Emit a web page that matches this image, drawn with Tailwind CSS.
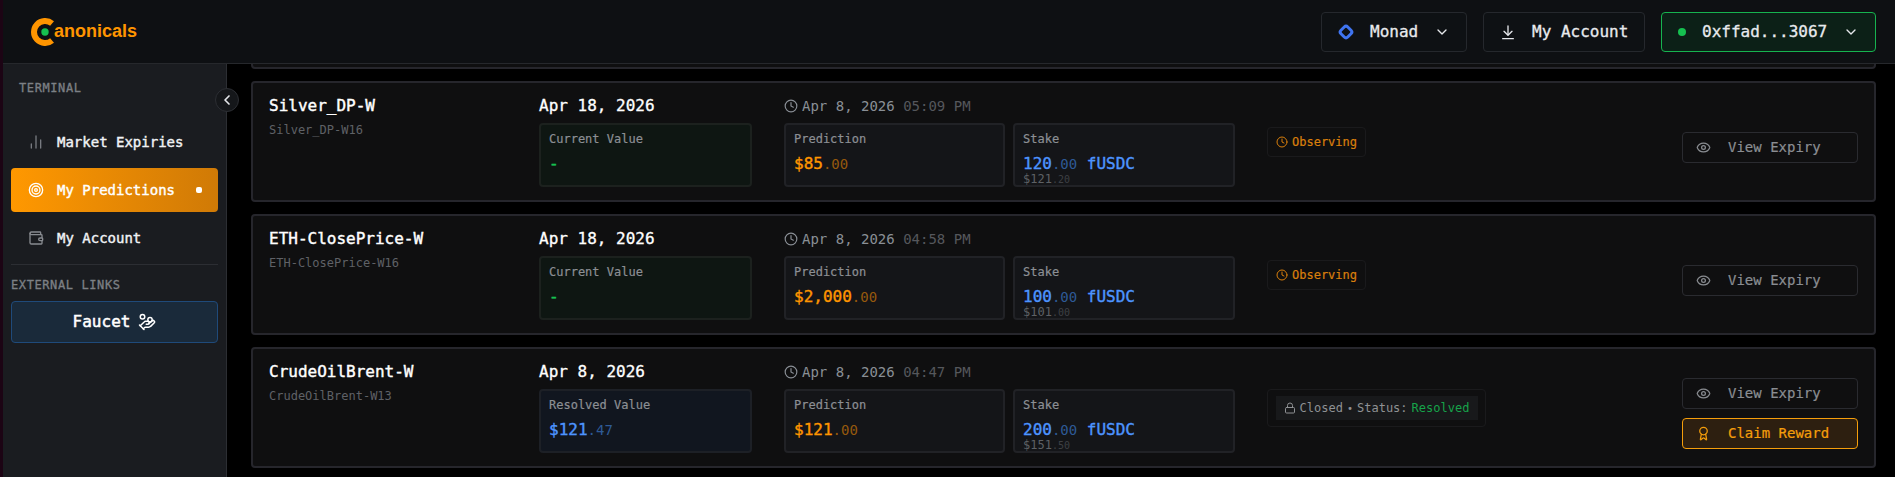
<!DOCTYPE html>
<html>
<head>
<meta charset="utf-8">
<script src="https://cdn.jsdelivr.net/npm/@tailwindcss/browser@4"></script>
</head>
<body class="bg-black">
<div class="flex h-[477px] w-[1895px] overflow-hidden bg-black font-['DejaVu_Sans_Mono',monospace] text-white">
  <div class="w-[3px] shrink-0 bg-[#1c0414]"></div>
  <div class="flex min-w-0 flex-1 flex-col">
    <header class="z-10 flex h-[64px] shrink-0 items-center justify-between border-b border-[#26282c] bg-[#0e1013] pr-[19px] pl-[28px]">
      <div class="flex items-center">
        <svg width="28" height="28" viewBox="0 0 28 28" fill="none"><path d="M21.07 5.57A11 11 0 1 0 21.07 22.43" stroke="#ff9500" stroke-width="6"/><circle cx="14" cy="14" r="3.7" fill="#16c050"/></svg>
        <span class="-ml-[5px] font-['Liberation_Sans',sans-serif] text-[18px] font-bold text-[#ff9500]">anonicals</span>
      </div>
      <div class="flex items-center gap-4">
        <button class="flex h-[40px] w-[146px] items-center gap-4 rounded border border-[#25282d] bg-[#0e1114] px-4 text-[16px] whitespace-nowrap text-[#e8eaed] [-webkit-text-stroke:0.3px_currentColor]">
          <svg class="shrink-0" width="16" height="16" viewBox="0 0 16 16" fill="none"><rect x="3.2" y="3.2" width="9.6" height="9.6" rx="2.5" transform="rotate(45 8 8)" stroke="#3f74f0" stroke-width="3"/></svg>
          <span>Monad</span>
          <svg class="shrink-0" width="16" height="16" viewBox="0 0 24 24" fill="none" stroke="#e5e7eb" stroke-width="2" stroke-linecap="round" stroke-linejoin="round"><path d="m6 9 6 6 6-6"/></svg>
        </button>
        <button class="flex h-[40px] w-[162px] items-center gap-4 rounded border border-[#25282d] bg-[#0e1114] px-4 text-[16px] whitespace-nowrap text-[#e8eaed] [-webkit-text-stroke:0.3px_currentColor]">
          <svg class="shrink-0" width="16" height="16" viewBox="0 0 24 24" fill="none" stroke="#e5e7eb" stroke-width="2" stroke-linecap="round" stroke-linejoin="round"><path d="M12 3v13"/><path d="m6 11 6 6 6-6"/><path d="M4 22h16"/></svg>
          <span>My Account</span>
        </button>
        <button class="flex h-[40px] w-[215px] items-center gap-4 rounded border border-[#16b34f] bg-[#0c2017] px-4 text-[16px] whitespace-nowrap text-[#e8eaed] [-webkit-text-stroke:0.3px_currentColor]">
          <span class="h-2 w-2 shrink-0 rounded-full bg-[#16c050]"></span>
          <span>0xffad...3067</span>
          <svg class="shrink-0" width="16" height="16" viewBox="0 0 24 24" fill="none" stroke="#e5e7eb" stroke-width="2" stroke-linecap="round" stroke-linejoin="round"><path d="m6 9 6 6 6-6"/></svg>
        </button>
      </div>
    </header>
    <div class="flex min-h-0 flex-1">
      <aside class="relative w-[224px] shrink-0 border-r border-[#2c2e33] bg-[#1a1c20] px-2 pt-4">
        <div class="pl-2 text-[12px] leading-4 tracking-[0.6px] text-[#7d8085] [-webkit-text-stroke:0.3px_currentColor]">TERMINAL</div>
        <button class="absolute top-[24px] -right-[13px] z-10 flex h-6 w-6 items-center justify-center rounded-full border border-[#2c2e33] bg-[#15171a]">
          <svg width="16" height="16" viewBox="0 0 24 24" fill="none" stroke="#e5e7eb" stroke-width="2.5" stroke-linecap="round" stroke-linejoin="round"><path d="m15 18-6-6 6-6"/></svg>
        </button>
        <nav class="mt-6 flex flex-col gap-1 text-[14px] [-webkit-text-stroke:0.4px_currentColor]">
          <a class="flex h-[44px] items-center gap-[13px] pl-[17px] text-[#f0f2f5]">
            <svg width="16" height="16" viewBox="0 0 24 24" fill="none" stroke="#777a80" stroke-width="2" stroke-linecap="round"><path d="M5 21v-6"/><path d="M12 21V3"/><path d="M19 21V9"/></svg>
            <span>Market Expiries</span>
          </a>
          <a class="flex h-[44px] items-center justify-between rounded-sm bg-linear-to-r from-[#ff9800] to-[#d07a06] pr-4 pl-[17px] text-white">
            <span class="flex items-center gap-[13px]">
              <svg width="16" height="16" viewBox="0 0 24 24" fill="none" stroke="#fff" stroke-width="2"><circle cx="12" cy="12" r="10"/><circle cx="12" cy="12" r="6"/><circle cx="12" cy="12" r="2"/></svg>
              <span>My Predictions</span>
            </span>
            <span class="h-[6px] w-[6px] rounded-[2px] bg-white"></span>
          </a>
          <a class="flex h-[44px] items-center gap-[13px] pl-[17px] text-[#f0f2f5]">
            <svg width="16" height="16" viewBox="0 0 24 24" fill="none" stroke="#888b90" stroke-width="2" stroke-linecap="round" stroke-linejoin="round"><path d="M19 7V4a1 1 0 0 0-1-1H5a2 2 0 0 0 0 4h15a1 1 0 0 1 1 1v4h-3a2 2 0 0 0 0 4h3a1 1 0 0 0 1-1v-2a1 1 0 0 0-1-1"/><path d="M3 5v14a2 2 0 0 0 2 2h15a1 1 0 0 0 1-1v-4"/></svg>
            <span>My Account</span>
          </a>
        </nav>
        <div class="mt-1 h-px bg-[#2c2e33]"></div>
        <div class="mt-[12px] text-[12px] leading-4 tracking-[0.6px] text-[#7d8085] [-webkit-text-stroke:0.3px_currentColor]">EXTERNAL LINKS</div>
        <a class="mt-[8px] flex h-[42px] items-center justify-center gap-2 rounded border border-[#1f4a7a] bg-[#1a2a3a] text-[16px] text-white [-webkit-text-stroke:0.5px_currentColor]">
          <span>Faucet</span>
          <svg width="18" height="18" viewBox="0 0 24 24" fill="none" stroke="#fff" stroke-width="2" stroke-linecap="round" stroke-linejoin="round"><path d="M11 15h2a2 2 0 1 0 0-4h-3c-.6 0-1.1.2-1.4.6L3 17"/><path d="m7 21 1.6-1.4c.3-.4.8-.6 1.4-.6h4c1.1 0 2.1-.4 2.8-1.2l4.6-4.4a2 2 0 0 0-2.75-2.91l-4.2 3.9"/><path d="m2 16 6 6"/><circle cx="16" cy="9" r="2.9"/><circle cx="6" cy="5" r="3"/></svg>
        </a>
      </aside>
      <main class="flex min-w-0 flex-1 flex-col justify-end gap-3 overflow-hidden pr-[19px] pb-[9px] pl-[24px]">
        <div class="h-[121px] shrink-0 rounded border-2 border-[#26262c] bg-[#0f0f10]"></div>

        <article class="grid h-[121px] shrink-0 grid-cols-[270px_245px_483px_1fr_176px] rounded border-2 border-[#26262c] bg-[#0f0f10] pr-4 pl-4">
          <div class="pt-[11px]">
            <div class="text-[16px] leading-6 text-white [-webkit-text-stroke:0.4px_currentColor]">Silver_DP-W</div>
            <div class="mt-1 text-[12px] leading-4 text-[#5f6166]">Silver_DP-W16</div>
          </div>
          <div class="pt-[11px]">
            <div class="mb-[5px] text-[16px] leading-6 text-white [-webkit-text-stroke:0.3px_currentColor]">Apr 18, 2026</div>
            <div class="mr-[32px] h-[64px] rounded border-2 border-[#1c211e] bg-[#0e1612] px-2 pt-[6px]">
              <div class="text-[12px] leading-4 text-[#8c8f94] [-webkit-text-stroke:0.2px_currentColor]">Current Value</div>
              <div class="mt-[5px] text-[16px] leading-6 text-[#16c050] [-webkit-text-stroke:0.5px_currentColor]">-</div>
            </div>
          </div>
          <div class="pt-[11px]">
            <div class="mb-[5px] flex h-6 items-center gap-[4px] text-[14px] text-[#8a8f96]">
              <svg width="14" height="14" viewBox="0 0 24 24" fill="none" stroke="#8a8f96" stroke-width="2" stroke-linecap="round" stroke-linejoin="round"><circle cx="12" cy="12" r="10"/><path d="M12 6v6l4 2"/></svg>
              <span>Apr 8, 2026 <span class="text-[#55575c]">05:09 PM</span></span>
            </div>
            <div class="flex gap-2 pr-[32px]">
              <div class="h-[64px] w-[221px] rounded border-2 border-[#212226] bg-[#141518] px-2 pt-[6px]">
                <div class="text-[12px] leading-4 text-[#8c8f94] [-webkit-text-stroke:0.2px_currentColor]">Prediction</div>
                <div class="mt-[5px] text-[16px] leading-6 text-[#ff9500] [-webkit-text-stroke:0.4px_currentColor]">$85<span class="text-[14px] text-[#96590d] [-webkit-text-stroke:0]">.00</span></div>
              </div>
              <div class="h-[64px] w-[222px] rounded border-2 border-[#212226] bg-[#141518] px-2 pt-[6px]">
                <div class="text-[12px] leading-4 text-[#8c8f94] [-webkit-text-stroke:0.2px_currentColor]">Stake</div>
                <div class="mt-[5px] text-[16px] leading-6 text-[#4d94ff] [-webkit-text-stroke:0.4px_currentColor]">120<span class="text-[14px] text-[#2e5a96] [-webkit-text-stroke:0]">.00</span> fUSDC</div>
                <div class="-mt-[5px] text-[12px] leading-4 text-[#5e6165]">$121<span class="text-[10px] text-[#3e4044]">.20</span></div>
              </div>
            </div>
          </div>
          <div class="pt-[44px]">
            <div class="flex h-[30px] w-fit items-center gap-[4px] rounded border border-[#1a1a1c] px-2 text-[12px] text-[#d97f0c] [-webkit-text-stroke:0.2px_currentColor]">
              <svg width="12" height="12" viewBox="0 0 24 24" fill="none" stroke="#d97f0c" stroke-width="2" stroke-linecap="round" stroke-linejoin="round"><circle cx="12" cy="12" r="10"/><path d="M12 6v6l4 2"/></svg>
              <span>Observing</span>
            </div>
          </div>
          <div class="flex flex-col gap-[9px] pt-[49px]">
            <button class="flex h-[31px] items-center gap-[17px] rounded border border-[#2a2b30] px-[13px] text-[14px] text-[#8a8d92] [-webkit-text-stroke:0.2px_currentColor]">
              <svg width="15" height="15" viewBox="0 0 24 24" fill="none" stroke="#8a8d92" stroke-width="2" stroke-linecap="round" stroke-linejoin="round"><path d="M2.062 12.348a1 1 0 0 1 0-.696 10.75 10.75 0 0 1 19.876 0 1 1 0 0 1 0 .696 10.75 10.75 0 0 1-19.876 0"/><circle cx="12" cy="12" r="3"/></svg>
              <span>View Expiry</span>
            </button>
          </div>
        </article>

        <article class="grid h-[121px] shrink-0 grid-cols-[270px_245px_483px_1fr_176px] rounded border-2 border-[#26262c] bg-[#0f0f10] pr-4 pl-4">
          <div class="pt-[11px]">
            <div class="text-[16px] leading-6 text-white [-webkit-text-stroke:0.4px_currentColor]">ETH-ClosePrice-W</div>
            <div class="mt-1 text-[12px] leading-4 text-[#5f6166]">ETH-ClosePrice-W16</div>
          </div>
          <div class="pt-[11px]">
            <div class="mb-[5px] text-[16px] leading-6 text-white [-webkit-text-stroke:0.3px_currentColor]">Apr 18, 2026</div>
            <div class="mr-[32px] h-[64px] rounded border-2 border-[#1c211e] bg-[#0e1612] px-2 pt-[6px]">
              <div class="text-[12px] leading-4 text-[#8c8f94] [-webkit-text-stroke:0.2px_currentColor]">Current Value</div>
              <div class="mt-[5px] text-[16px] leading-6 text-[#16c050] [-webkit-text-stroke:0.5px_currentColor]">-</div>
            </div>
          </div>
          <div class="pt-[11px]">
            <div class="mb-[5px] flex h-6 items-center gap-[4px] text-[14px] text-[#8a8f96]">
              <svg width="14" height="14" viewBox="0 0 24 24" fill="none" stroke="#8a8f96" stroke-width="2" stroke-linecap="round" stroke-linejoin="round"><circle cx="12" cy="12" r="10"/><path d="M12 6v6l4 2"/></svg>
              <span>Apr 8, 2026 <span class="text-[#55575c]">04:58 PM</span></span>
            </div>
            <div class="flex gap-2 pr-[32px]">
              <div class="h-[64px] w-[221px] rounded border-2 border-[#212226] bg-[#141518] px-2 pt-[6px]">
                <div class="text-[12px] leading-4 text-[#8c8f94] [-webkit-text-stroke:0.2px_currentColor]">Prediction</div>
                <div class="mt-[5px] text-[16px] leading-6 text-[#ff9500] [-webkit-text-stroke:0.4px_currentColor]">$2,000<span class="text-[14px] text-[#96590d] [-webkit-text-stroke:0]">.00</span></div>
              </div>
              <div class="h-[64px] w-[222px] rounded border-2 border-[#212226] bg-[#141518] px-2 pt-[6px]">
                <div class="text-[12px] leading-4 text-[#8c8f94] [-webkit-text-stroke:0.2px_currentColor]">Stake</div>
                <div class="mt-[5px] text-[16px] leading-6 text-[#4d94ff] [-webkit-text-stroke:0.4px_currentColor]">100<span class="text-[14px] text-[#2e5a96] [-webkit-text-stroke:0]">.00</span> fUSDC</div>
                <div class="-mt-[5px] text-[12px] leading-4 text-[#5e6165]">$101<span class="text-[10px] text-[#3e4044]">.00</span></div>
              </div>
            </div>
          </div>
          <div class="pt-[44px]">
            <div class="flex h-[30px] w-fit items-center gap-[4px] rounded border border-[#1a1a1c] px-2 text-[12px] text-[#d97f0c] [-webkit-text-stroke:0.2px_currentColor]">
              <svg width="12" height="12" viewBox="0 0 24 24" fill="none" stroke="#d97f0c" stroke-width="2" stroke-linecap="round" stroke-linejoin="round"><circle cx="12" cy="12" r="10"/><path d="M12 6v6l4 2"/></svg>
              <span>Observing</span>
            </div>
          </div>
          <div class="flex flex-col gap-[9px] pt-[49px]">
            <button class="flex h-[31px] items-center gap-[17px] rounded border border-[#2a2b30] px-[13px] text-[14px] text-[#8a8d92] [-webkit-text-stroke:0.2px_currentColor]">
              <svg width="15" height="15" viewBox="0 0 24 24" fill="none" stroke="#8a8d92" stroke-width="2" stroke-linecap="round" stroke-linejoin="round"><path d="M2.062 12.348a1 1 0 0 1 0-.696 10.75 10.75 0 0 1 19.876 0 1 1 0 0 1 0 .696 10.75 10.75 0 0 1-19.876 0"/><circle cx="12" cy="12" r="3"/></svg>
              <span>View Expiry</span>
            </button>
          </div>
        </article>

        <article class="grid h-[121px] shrink-0 grid-cols-[270px_245px_483px_1fr_176px] rounded border-2 border-[#26262c] bg-[#0f0f10] pr-4 pl-4">
          <div class="pt-[11px]">
            <div class="text-[16px] leading-6 text-white [-webkit-text-stroke:0.4px_currentColor]">CrudeOilBrent-W</div>
            <div class="mt-1 text-[12px] leading-4 text-[#5f6166]">CrudeOilBrent-W13</div>
          </div>
          <div class="pt-[11px]">
            <div class="mb-[5px] text-[16px] leading-6 text-white [-webkit-text-stroke:0.3px_currentColor]">Apr 8, 2026</div>
            <div class="mr-[32px] h-[64px] rounded border-2 border-[#1d2026] bg-[#11161f] px-2 pt-[6px]">
              <div class="text-[12px] leading-4 text-[#8c8f94] [-webkit-text-stroke:0.2px_currentColor]">Resolved Value</div>
              <div class="mt-[5px] text-[16px] leading-6 text-[#4d94ff] [-webkit-text-stroke:0.4px_currentColor]">$121<span class="text-[14px] text-[#2e5a96] [-webkit-text-stroke:0]">.47</span></div>
            </div>
          </div>
          <div class="pt-[11px]">
            <div class="mb-[5px] flex h-6 items-center gap-[4px] text-[14px] text-[#8a8f96]">
              <svg width="14" height="14" viewBox="0 0 24 24" fill="none" stroke="#8a8f96" stroke-width="2" stroke-linecap="round" stroke-linejoin="round"><circle cx="12" cy="12" r="10"/><path d="M12 6v6l4 2"/></svg>
              <span>Apr 8, 2026 <span class="text-[#55575c]">04:47 PM</span></span>
            </div>
            <div class="flex gap-2 pr-[32px]">
              <div class="h-[64px] w-[221px] rounded border-2 border-[#212226] bg-[#141518] px-2 pt-[6px]">
                <div class="text-[12px] leading-4 text-[#8c8f94] [-webkit-text-stroke:0.2px_currentColor]">Prediction</div>
                <div class="mt-[5px] text-[16px] leading-6 text-[#ff9500] [-webkit-text-stroke:0.4px_currentColor]">$121<span class="text-[14px] text-[#96590d] [-webkit-text-stroke:0]">.00</span></div>
              </div>
              <div class="h-[64px] w-[222px] rounded border-2 border-[#212226] bg-[#141518] px-2 pt-[6px]">
                <div class="text-[12px] leading-4 text-[#8c8f94] [-webkit-text-stroke:0.2px_currentColor]">Stake</div>
                <div class="mt-[5px] text-[16px] leading-6 text-[#4d94ff] [-webkit-text-stroke:0.4px_currentColor]">200<span class="text-[14px] text-[#2e5a96] [-webkit-text-stroke:0]">.00</span> fUSDC</div>
                <div class="-mt-[5px] text-[12px] leading-4 text-[#5e6165]">$151<span class="text-[10px] text-[#3e4044]">.50</span></div>
              </div>
            </div>
          </div>
          <div class="pt-[40px]">
            <div class="flex h-[38px] w-[219px] items-center justify-center rounded border border-[#1a1a1c]">
              <div class="flex h-6 w-[202px] items-center justify-center gap-[4px] bg-[#18191b] text-[12px] text-[#8f9194]">
                <svg width="12" height="12" viewBox="0 0 24 24" fill="none" stroke="#8f9194" stroke-width="2" stroke-linecap="round" stroke-linejoin="round"><rect x="3" y="11" width="18" height="11" rx="2"/><path d="M7 11V7a5 5 0 0 1 10 0v4"/></svg>
                <span>Closed</span><span class="text-[10px]">•</span><span>Status:</span><span class="text-[#16a34a]">Resolved</span>
              </div>
            </div>
          </div>
          <div class="flex flex-col gap-[9px] pt-[29px]">
            <button class="flex h-[31px] items-center gap-[17px] rounded border border-[#2a2b30] px-[13px] text-[14px] text-[#8a8d92] [-webkit-text-stroke:0.2px_currentColor]">
              <svg width="15" height="15" viewBox="0 0 24 24" fill="none" stroke="#8a8d92" stroke-width="2" stroke-linecap="round" stroke-linejoin="round"><path d="M2.062 12.348a1 1 0 0 1 0-.696 10.75 10.75 0 0 1 19.876 0 1 1 0 0 1 0 .696 10.75 10.75 0 0 1-19.876 0"/><circle cx="12" cy="12" r="3"/></svg>
              <span>View Expiry</span>
            </button>
            <button class="flex h-[31px] items-center gap-[17px] rounded border border-[#f59e0b] bg-[#2d1f10] px-[13px] text-[14px] text-[#f59e0b] [-webkit-text-stroke:0.2px_currentColor]">
              <svg width="15" height="15" viewBox="0 0 24 24" fill="none" stroke="#f59e0b" stroke-width="2" stroke-linecap="round" stroke-linejoin="round"><path d="m15.477 12.89 1.515 8.526a.5.5 0 0 1-.81.47l-3.58-2.687a1 1 0 0 0-1.197 0l-3.586 2.686a.5.5 0 0 1-.81-.469l1.514-8.526"/><circle cx="12" cy="8" r="6"/></svg>
              <span>Claim Reward</span>
            </button>
          </div>
        </article>
      </main>
    </div>
  </div>
</div>
</body>
</html>
